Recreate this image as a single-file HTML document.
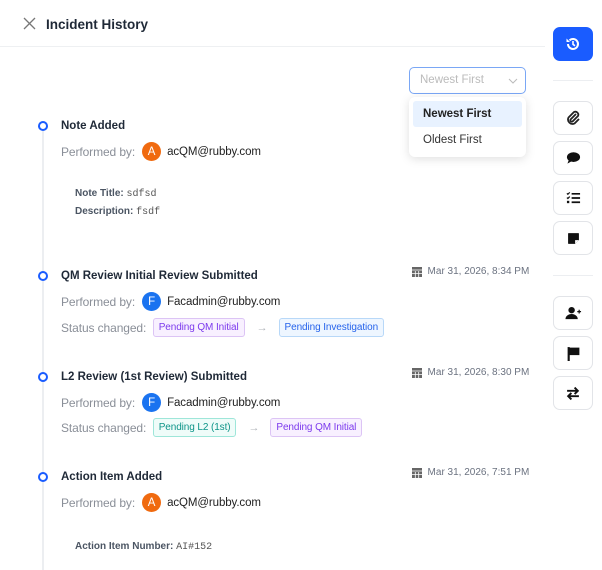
<!DOCTYPE html>
<html><head><meta charset="utf-8"><style>
*{box-sizing:border-box;margin:0;padding:0}
body{width:602px;height:566px;overflow:hidden;background:#fff;font-family:"Liberation Sans",sans-serif;position:relative;color:#1f2937}
.a{position:absolute}
.hdr{left:0;top:46px;width:545px;height:1px;background:#eef0f2}
.title{left:46px;top:17px;font-size:13.5px;font-weight:bold;color:#1f2937}
.line{left:42px;top:130px;width:2px;height:440px;background:#eceef1}
.dot{width:10px;height:10px;border:2px solid #1a5cff;border-radius:50%;background:#fff}
.t{font-size:11.5px;font-weight:bold;color:#1f2937}
.pb{font-size:12px;color:#8a8f98;display:flex;align-items:center;letter-spacing:-0.1px}
.av{width:19px;height:19px;border-radius:50%;color:#fff;font-size:11.5px;display:inline-flex;align-items:center;justify-content:center;margin:0 6px 0 7px}
.em{color:#222;font-size:11.5px}
.pill{font-size:10px;padding:3px 5px;border-radius:3px;border:1px solid;display:inline-block;letter-spacing:-0.1px}
.pu{color:#7c3aed;background:#f8f0ff;border-color:#dcc4f5}
.bl{color:#2563eb;background:#eef6ff;border-color:#b8d8f8}
.te{color:#0d9488;background:#effcf9;border-color:#9ee6d9}
.arr{color:#b0b4ba;font-size:11px;margin:0 11px 0 12px}
.det{font-size:10px;color:#4b5563;font-weight:bold}
.det span{font-family:"Liberation Mono",monospace;font-weight:normal;color:#555}
.date{font-size:10px;color:#6b7280;display:flex;align-items:center}
.btn{left:553px;width:40px;height:34px;border:1px solid #e2e4e8;border-radius:7px;display:flex;align-items:center;justify-content:center;background:#fff}
.sep{left:553px;width:40px;height:1px;background:#eceef1}
</style></head><body>
<svg class="a" style="left:23px;top:17px" width="13" height="13" viewBox="0 0 13 13"><path d="M1 1L12 12M12 1L1 12" stroke="#777" stroke-width="1.3"/></svg>
<div class="a title">Incident History</div>
<div class="a hdr"></div>

<div class="a" style="left:409px;top:67px;width:117px;height:27px;border:1px solid #7aa7f5;border-radius:5px;font-size:11.5px;color:#bbb;padding:6px 0 0 10px">Newest First
<svg class="a" style="left:98px;top:10px" width="10" height="6" viewBox="0 0 10 6"><path d="M1 1L5 5L9 1" stroke="#bbb" fill="none"/></svg></div>
<div class="a" style="left:409px;top:97px;width:117px;height:60px;background:#fff;border-radius:6px;box-shadow:0 2px 10px rgba(0,0,0,0.13);padding:4px">
<div style="background:#e8f2ff;border-radius:3px;height:26px;font-size:11.5px;font-weight:bold;color:#222;padding:7px 0 0 10px">Newest First</div>
<div style="height:27px;font-size:11.5px;color:#333;padding:7px 0 0 10px">Oldest First</div></div>

<div class="a line"></div>
<div class="a dot" style="left:38px;top:121px"></div>
<div class="a t" style="left:61px;top:120px">Note Added</div>
<div class="a pb" style="left:61px;top:142px">Performed by:<span class="av" style="background:#f06a0f">A</span><span class="em">acQM@rubby.com</span></div>
<div class="a det" style="left:75px;top:188px">Note Title: <span>sdfsd</span></div>
<div class="a det" style="left:75px;top:206px">Description: <span>fsdf</span></div>

<div class="a dot" style="left:38px;top:271px"></div>
<div class="a t" style="left:61px;top:270px">QM Review Initial Review Submitted</div>
<div class="a date" style="left:412px;top:266px"><svg width="10" height="11" viewBox="0 0 10 11"><rect x="0" y="1" width="10" height="10" fill="#666"/><path d="M0 4H10M3.3 5v6M6.7 5v6M0 7.5H10" stroke="#fff" stroke-width=".8"/></svg>&nbsp;&nbsp;Mar 31, 2026, 8:34 PM</div>
<div class="a pb" style="left:61px;top:292px">Performed by:<span class="av" style="background:#1a73f0">F</span><span class="em">Facadmin@rubby.com</span></div>
<div class="a pb" style="left:61px;top:318px">Status changed:&nbsp;&nbsp;<span class="pill pu">Pending QM Initial</span><span class="arr">→</span><span class="pill bl">Pending Investigation</span></div>

<div class="a dot" style="left:38px;top:372px"></div>
<div class="a t" style="left:61px;top:371px">L2 Review (1st Review) Submitted</div>
<div class="a date" style="left:412px;top:367px"><svg width="10" height="11" viewBox="0 0 10 11"><rect x="0" y="1" width="10" height="10" fill="#666"/><path d="M0 4H10M3.3 5v6M6.7 5v6M0 7.5H10" stroke="#fff" stroke-width=".8"/></svg>&nbsp;&nbsp;Mar 31, 2026, 8:30 PM</div>
<div class="a pb" style="left:61px;top:393px">Performed by:<span class="av" style="background:#1a73f0">F</span><span class="em">Facadmin@rubby.com</span></div>
<div class="a pb" style="left:61px;top:418px">Status changed:&nbsp;&nbsp;<span class="pill te">Pending L2 (1st)</span><span class="arr">→</span><span class="pill pu">Pending QM Initial</span></div>

<div class="a dot" style="left:38px;top:472px"></div>
<div class="a t" style="left:61px;top:471px">Action Item Added</div>
<div class="a date" style="left:412px;top:467px"><svg width="10" height="11" viewBox="0 0 10 11"><rect x="0" y="1" width="10" height="10" fill="#666"/><path d="M0 4H10M3.3 5v6M6.7 5v6M0 7.5H10" stroke="#fff" stroke-width=".8"/></svg>&nbsp;&nbsp;Mar 31, 2026, 7:51 PM</div>
<div class="a pb" style="left:61px;top:493px">Performed by:<span class="av" style="background:#f06a0f">A</span><span class="em">acQM@rubby.com</span></div>
<div class="a det" style="left:75px;top:541px">Action Item Number: <span>AI#152</span></div>

<div class="a btn" style="top:27px;background:#1a5cff;border-color:#1a5cff"><svg width="16" height="16" viewBox="0 0 16 16"><path d="M3 8a5 5 0 1 0 1.5-3.6" stroke="#fff" stroke-width="2" fill="none"/><path d="M1.5 2.5v3.5h3.5z" fill="#fff"/><path d="M8 5v3.3l2 1.5" stroke="#fff" stroke-width="1.6" fill="none"/></svg></div>
<div class="a sep" style="top:80px"></div>
<div class="a btn" style="top:101px"><svg width="16" height="16" viewBox="0 0 16 16"><path d="M11 4L5.5 9.5a1.5 1.5 0 0 0 2 2L13 6a3 3 0 0 0-4-4L3.5 7.5a4.5 4.5 0 0 0 6 6L14 9" stroke="#222" stroke-width="1.8" fill="none"/></svg></div>
<div class="a btn" style="top:141px"><svg width="15" height="14" viewBox="0 0 16 14"><ellipse cx="8" cy="6" rx="7" ry="5.2" fill="#111"/><path d="M3 9L1.5 13L6 10.5z" fill="#111"/></svg></div>
<div class="a btn" style="top:181px"><svg width="15" height="14" viewBox="0 0 16 14"><path d="M1 2l1 1 2-2M1 6.5l1 1 2-2" stroke="#111" stroke-width="1.3" fill="none"/><rect x="1" y="10" width="2.5" height="2.5" fill="#111"/><path d="M6 2.5h9M6 7h9M6 11.5h9" stroke="#111" stroke-width="1.8"/></svg></div>
<div class="a btn" style="top:221px"><svg width="13" height="13" viewBox="0 0 12 12"><path d="M1.5 1h9a.5.5 0 0 1 .5.5v6L7.5 11H1.5a.5.5 0 0 1-.5-.5v-9a.5.5 0 0 1 .5-.5z" fill="#111"/><path d="M7.5 11V7.5H11" fill="#fff"/></svg></div>
<div class="a sep" style="top:275px"></div>
<div class="a btn" style="top:296px"><svg width="17" height="14" viewBox="0 0 18 14"><circle cx="7" cy="4" r="3.4" fill="#111"/><path d="M0.5 13.5a6.5 5.5 0 0 1 13 0z" fill="#111"/><path d="M15 3.5v4M13 5.5h4" stroke="#111" stroke-width="1.3"/></svg></div>
<div class="a btn" style="top:336px"><svg width="13" height="15" viewBox="0 0 12 14"><path d="M1.5 1v13" stroke="#111" stroke-width="2"/><path d="M2 1.5h9.5v7H2z" fill="#111"/></svg></div>
<div class="a btn" style="top:376px"><svg width="14" height="15" viewBox="0 0 13 14"><path d="M1 4.5h10M8 1.5l3 3-3 3M12 9.5H2M5 6.5l-3 3 3 3" stroke="#111" stroke-width="1.8" fill="none"/></svg></div>
</body></html>
